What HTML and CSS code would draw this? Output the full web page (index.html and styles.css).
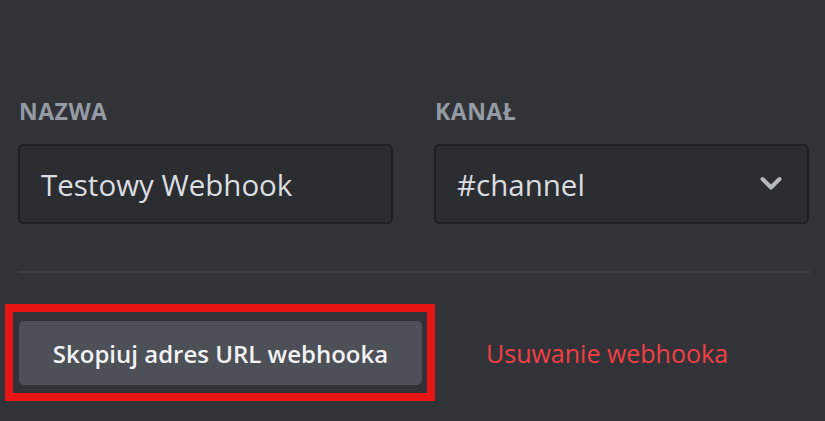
FILE: index.html
```html
<!DOCTYPE html>
<html lang="pl">
<head>
<meta charset="utf-8">
<link rel="stylesheet" href="styles.css">
</head>
<body>
<div class="page">
  <div class="fields">
    <div class="field">
      <div class="label">Nazwa</div>
      <div class="input">Testowy Webhook</div>
    </div>
    <div class="field">
      <div class="label">Kanał</div>
      <div class="input select">
        <span>#channel</span>
        <svg class="chevron" width="24" height="24" viewBox="0 0 24 24"><path d="M3.5 7 L12 15.5 L20.5 7" fill="none" stroke="#b5bac1" stroke-width="4" stroke-linecap="round" stroke-linejoin="round"/></svg>
      </div>
    </div>
  </div>
  <div class="divider"></div>
  <div class="actions">
    <div class="highlight">
      <button class="btn">Skopiuj adres URL webhooka</button>
    </div>
    <a class="delete">Usuwanie webhooka</a>
  </div>
</div>
</body>
</html>
```
FILE: styles.css
```css
html, body {
  margin: 0;
  padding: 0;
  background: #313338;
  font-family: "Open Sans", "Noto Sans", sans-serif;
  width: 825px;
  height: 421px;
  overflow: hidden;
}
.page {
  padding: 96px 15px 0 18px;
}
.fields {
  display: grid;
  grid-template-columns: 375px 375px;
  column-gap: 41px;
}
.label {
  color: #949ba4;
  font-weight: 700;
  font-size: 23px;
  letter-spacing: 0.5px;
  text-transform: uppercase;
  line-height: 30px;
  padding-left: 1px;
  margin-bottom: 18px;
}
.input {
  box-sizing: border-box;
  height: 80px;
  background: #2b2d31;
  border: 2px solid #1e1f22;
  border-radius: 6px;
  color: #dbdee1;
  font-size: 29.5px;
  display: flex;
  align-items: center;
  padding: 0 21px;
}
.select {
  justify-content: space-between;
  padding-right: 24px;
}
.divider {
  height: 2px;
  background: #3f4147;
  margin-top: 47px;
}
.actions {
  display: flex;
  align-items: center;
  margin-top: 31px;
  margin-left: -13px;
}
.highlight {
  border: 8px solid #e81515;
  padding: 9px 5px 8px 6px;
}
.btn {
  display: block;
  width: 403px;
  height: 64px;
  background: #4e5058;
  border: none;
  border-radius: 5px;
  color: #f2f3f5;
  font-family: "Open Sans", "Noto Sans", sans-serif;
  font-weight: 600;
  font-size: 24px;
  padding: 0;
}
.delete {
  color: #f23f43;
  font-size: 25px;
  margin-left: 51px;
}
```
